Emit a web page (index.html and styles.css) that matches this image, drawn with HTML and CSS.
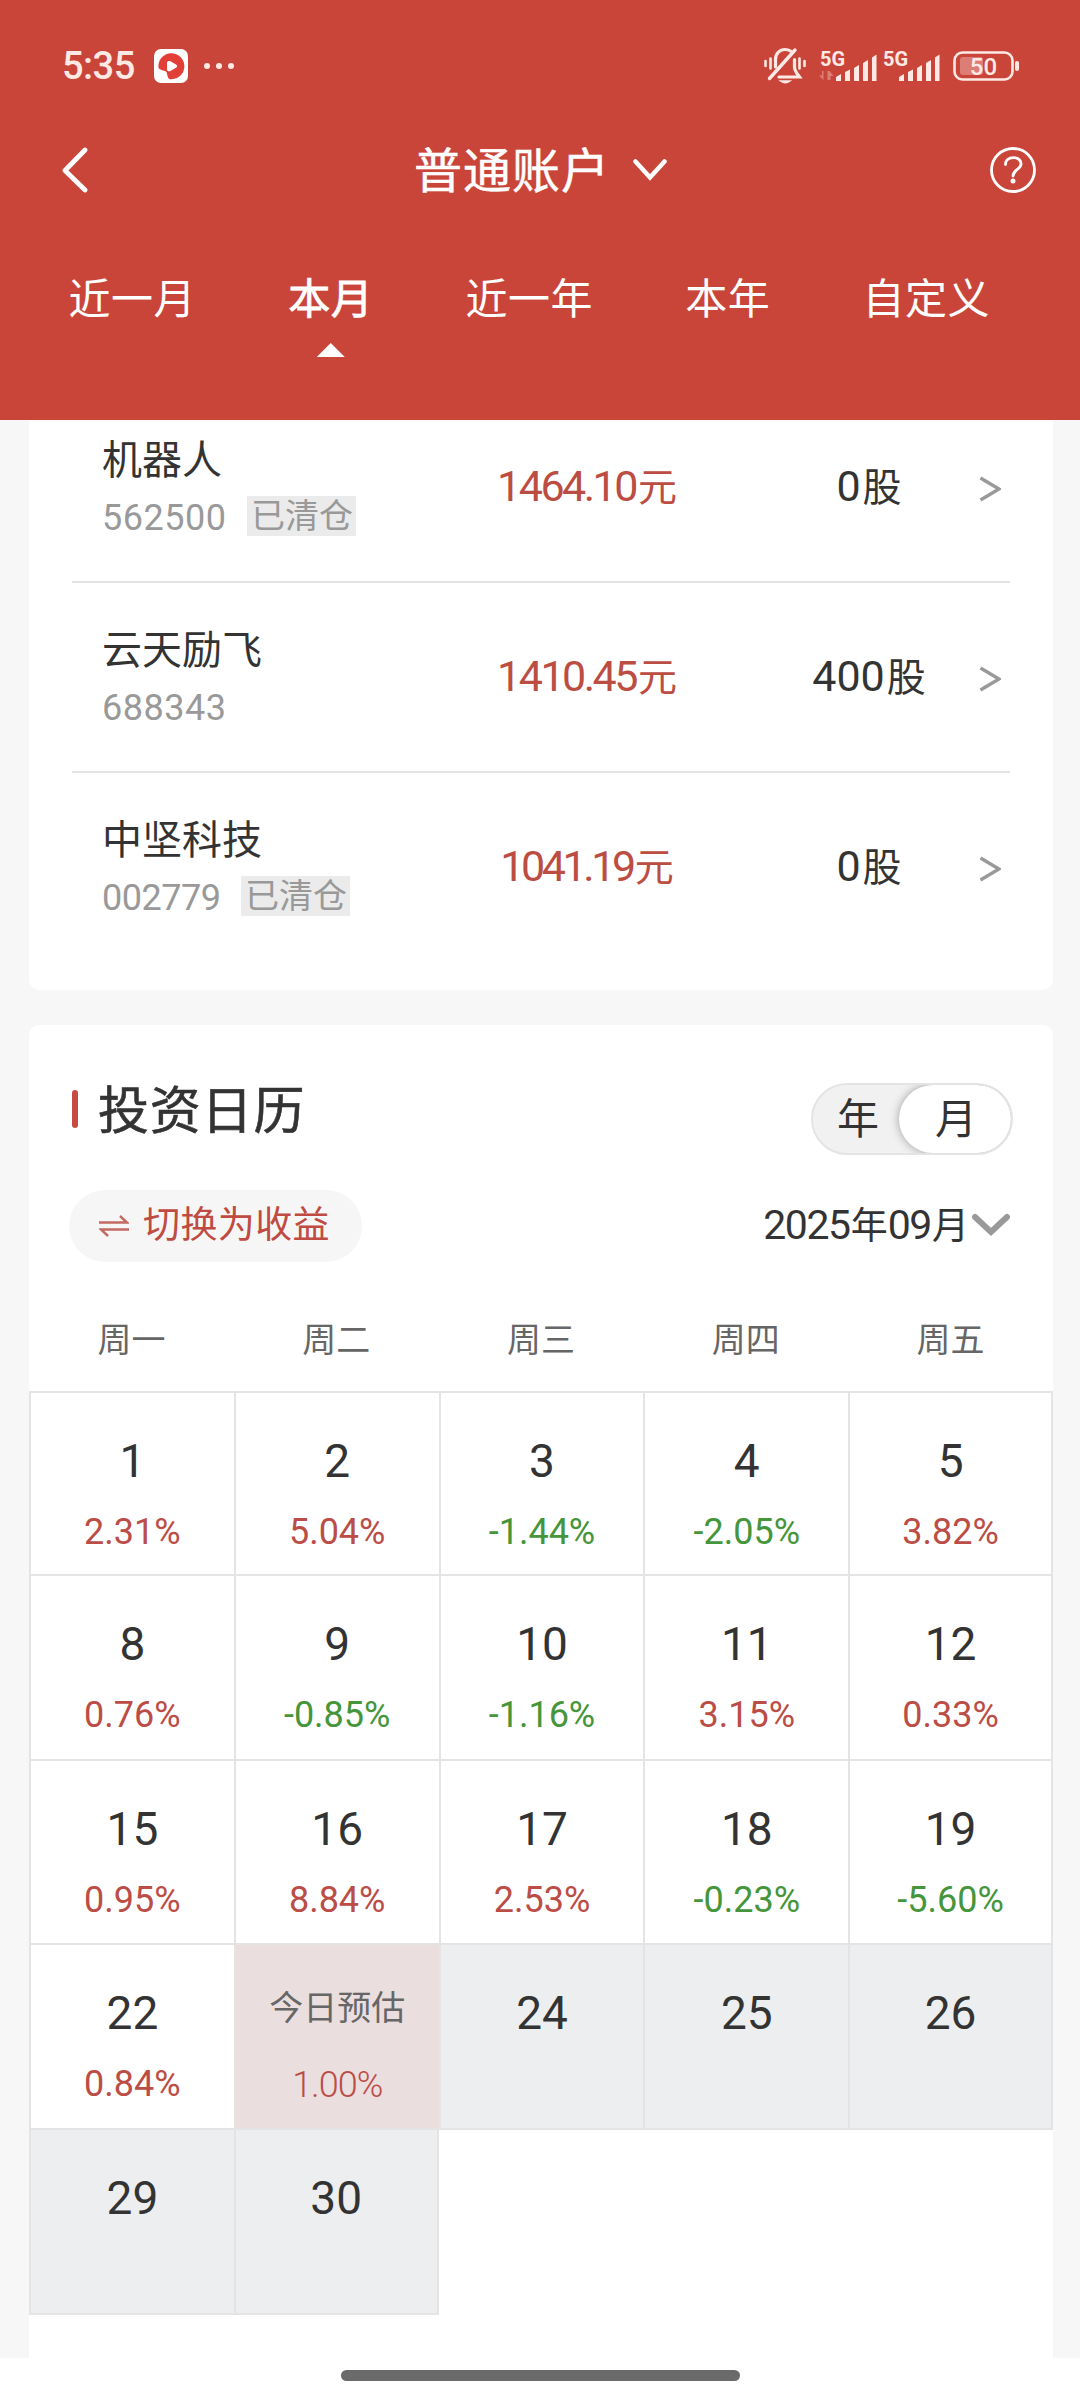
FILE: index.html
```html
<!DOCTYPE html>
<html lang="zh-CN">
<head>
    <meta charset="UTF-8">
    <meta name="viewport" content="width=device-width, initial-scale=1.0">
    <title>普通账户</title>
    <link rel="stylesheet" href="styles.css">
</head>
<body>
    <header class="header">
        <div class="status-bar">
            <span class="time">5:35</span>
            <svg class="app-icon" width="34" height="34" viewBox="0 0 34 34">
                <rect width="34" height="34" rx="7" fill="#fff"/>
                <path d="M4.500 19A13 13 0 1 1 15 30C13 28 13.500 25 12.500 23C11 21 7 22 4.500 19Z" fill="#e13f38"/>
                <path d="M13 13.500C13 12 15 11.500 16.500 12.200L22 15.500C23.500 16.500 23.500 17.800 22 18.800L16.500 22C15 22.800 13 22 13 20.500Z" fill="#fff"/>
            </svg>
            <svg class="dots" width="30" height="6" viewBox="0 0 30 6">
                <circle cx="3" cy="3" r="3"/><circle cx="15" cy="3" r="3"/><circle cx="27" cy="3" r="3"/>
            </svg>
            <div class="status-right">
                <svg class="bell" width="42" height="38" viewBox="0 0 42 38" fill="none" stroke="#ffe9e5" stroke-width="2.800" stroke-linecap="round">
                    <path d="M1.500 14v5M6.500 11.500v10M35.500 11.500v10M40.500 14v5" stroke-width="2.600"/>
                    <path d="M31 3L5.500 31.500" stroke-width="3.400"/>
                    <path d="M11.500 20V12.500C11.500 6 16 2.500 21 2.500C23 2.500 25 3 26.500 4" stroke-width="3.200"/>
                    <path d="M30.500 12.500V20C30.500 24 33 26.500 35.500 30H15" stroke-width="3.200"/>
                    <path d="M16.500 34H26Q21.200 37.500 16.500 34Z" fill="#ffe9e5" stroke-width="1.500"/>
                </svg>
                <svg class="signal" width="122" height="44" viewBox="0 -6 122 44">
                    <text x="1" y="16">5G</text>
                    <path class="faint" d="M4.500 21v9L0 25.500h3V21zM8.500 30v-9h2l4 5h-3v4z"/>
                    <path d="M17 31v-4l5-3v7zM26 31v-9l5-2.500V31zM35 31V18l5-3v16zM44 31V13l5-3v21zM53 31V7.500l4.500-3V31z"/>
                    <text x="64" y="16">5G</text>
                    <path d="M80 31v-4l5-3v7zM89 31v-9l5-2.500V31zM98 31V18l5-3v16zM107 31V13l5-3v21zM116 31V7.500l4.500-3V31z"/>
                </svg>
                <svg class="battery" width="68" height="30" viewBox="0 0 68 30">
                    <rect x="1.500" y="1.500" width="58" height="27" rx="8" fill="none" stroke="#ffe9e5" stroke-width="2.600"/>
                    <rect class="faint" x="7" y="6" width="23" height="18" rx="3"/>
                    <rect x="62" y="10" width="4" height="10" rx="2"/>
                    <text x="30.500" y="23.500" text-anchor="middle">50</text>
                </svg>
            </div>
        </div>

        <div class="nav-bar">
            <svg width="26" height="46" viewBox="0 0 26 46" fill="none" stroke="#fff" stroke-width="4.800" stroke-linecap="round" stroke-linejoin="round">
                <path d="M23 3L3 23.500L23 43"/>
            </svg>
            <div class="account">
                <span>普通账户</span>
                <svg width="34" height="22" viewBox="0 0 34 22" fill="none" stroke="#fff" stroke-width="4.500" stroke-linecap="round">
                    <path d="M2.500 2.500L17 18.500L31.500 2.500"/>
                </svg>
            </div>
            <svg width="46" height="46" viewBox="0 0 46 46" fill="none" stroke="#fff" stroke-width="2.800" stroke-linecap="round">
                <circle cx="23" cy="23" r="21.500"/>
                <path d="M15.500 17.500C15.500 8.500 31 8.500 31 17C31 22.500 23 22.500 23 29"/>
                <circle cx="23" cy="34" r="2.500" fill="#fff" stroke="none"/>
            </svg>
        </div>

        <nav class="tabs">
            <div class="tab">近一月</div>
            <div class="tab active">本月</div>
            <div class="tab">近一年</div>
            <div class="tab">本年</div>
            <div class="tab">自定义</div>
        </nav>
    </header>

    <main class="content">
        <section class="card stocks">
            <div class="stock">
                <div>
                    <div class="name">机器人</div>
                    <div class="code">562500<span class="tag">已清仓</span></div>
                </div>
                <div class="amount">1464.10<span class="unit">元</span></div>
                <div class="shares">0<span class="unit">股</span></div>
                <svg class="arrow" width="22" height="26" viewBox="0 0 22 26"><path d="M1.500 2L20 13L1.500 24"/></svg>
            </div>
            <div class="stock">
                <div>
                    <div class="name">云天励飞</div>
                    <div class="code">688343</div>
                </div>
                <div class="amount">1410.45<span class="unit">元</span></div>
                <div class="shares">400<span class="unit">股</span></div>
                <svg class="arrow" width="22" height="26" viewBox="0 0 22 26"><path d="M1.500 2L20 13L1.500 24"/></svg>
            </div>
            <div class="stock">
                <div>
                    <div class="name">中坚科技</div>
                    <div class="code narrow">002779<span class="tag">已清仓</span></div>
                </div>
                <div class="amount narrow">1041.19<span class="unit">元</span></div>
                <div class="shares">0<span class="unit">股</span></div>
                <svg class="arrow" width="22" height="26" viewBox="0 0 22 26"><path d="M1.500 2L20 13L1.500 24"/></svg>
            </div>
        </section>

        <section class="card calendar">
            <div class="calendar-head">
                <h2>投资日历</h2>
                <div class="toggle">
                    <span class="year">年</span>
                    <span class="month">月</span>
                </div>
            </div>
            <div class="calendar-tools">
                <div class="switch">
                    <svg width="30" height="22" viewBox="0 0 30 22" fill="none" stroke="#c56a62" stroke-width="2.400">
                        <path d="M0 7.500H28L21 1M30 14.500H2L9 21"/>
                    </svg>
                    <span>切换为收益</span>
                </div>
                <div class="date">
                    <span>2025<span class="han">年</span>09<span class="han">月</span></span>
                    <svg width="40" height="26" viewBox="0 0 40 26" fill="none" stroke="#999" stroke-width="6" stroke-linecap="round">
                        <path d="M4 4L20 19L36 4"/>
                    </svg>
                </div>
            </div>
            <div class="weekdays">
                <span>周一</span><span>周二</span><span>周三</span><span>周四</span><span>周五</span>
            </div>
            <div class="days">
                <div class="day"><b>1</b><span class="up">2.31%</span></div>
                <div class="day"><b>2</b><span class="up">5.04%</span></div>
                <div class="day"><b>3</b><span class="down">-1.44%</span></div>
                <div class="day"><b>4</b><span class="down">-2.05%</span></div>
                <div class="day last"><b>5</b><span class="up">3.82%</span></div>

                <div class="day"><b>8</b><span class="up">0.76%</span></div>
                <div class="day"><b>9</b><span class="down">-0.85%</span></div>
                <div class="day"><b>10</b><span class="down">-1.16%</span></div>
                <div class="day"><b>11</b><span class="up">3.15%</span></div>
                <div class="day last"><b>12</b><span class="up">0.33%</span></div>

                <div class="day"><b>15</b><span class="up">0.95%</span></div>
                <div class="day"><b>16</b><span class="up">8.84%</span></div>
                <div class="day"><b>17</b><span class="up">2.53%</span></div>
                <div class="day"><b>18</b><span class="down">-0.23%</span></div>
                <div class="day last"><b>19</b><span class="down">-5.60%</span></div>

                <div class="day"><b>22</b><span class="up">0.84%</span></div>
                <div class="day today"><b>今日预估</b><span class="up">1.00%</span></div>
                <div class="day future"><b>24</b></div>
                <div class="day future"><b>25</b></div>
                <div class="day future last"><b>26</b></div>

                <div class="day future"><b>29</b></div>
                <div class="day future last"><b>30</b></div>
            </div>
        </section>
    </main>

    <footer class="home-bar">
        <div class="handle"></div>
    </footer>
</body>
</html>
```

FILE: styles.css
```css
* {
    box-sizing: border-box;
}
body {
    margin: 0;
    width: 1080px;
    height: 2400px;
    overflow: hidden;
    display: flex;
    flex-direction: column;
    background-color: #f7f7f7;
    color: #333;
    font-family: Roboto, "Noto Sans CJK SC", sans-serif;
}
svg {
    display: block;
    flex: none;
}

/* Header */
.header {
    position: relative;
    z-index: 1;
    flex: none;
    height: 420px;
    background-color: #ca4539;
    color: #fff;
}
.status-bar {
    display: flex;
    align-items: center;
    height: 132px;
    padding: 0 59px 0 62px;
    color: #ffe9e5;
    fill: #ffe9e5;
}
.time {
    width: 92px;
    font-size: 38px;
    font-weight: 500;
    letter-spacing: -0.5px;
}
.dots {
    margin-left: 16px;
}
.status-right {
    display: flex;
    align-items: center;
    margin-left: auto;
}
.signal {
    margin-left: 13px;
}
.signal text {
    font-size: 20px;
    font-weight: 700;
}
.battery {
    margin-left: 12px;
}
.battery text {
    font-size: 24px;
    font-weight: 500;
}
.faint {
    opacity: 0.35;
}
.nav-bar {
    display: flex;
    align-items: center;
    justify-content: space-between;
    height: 76px;
    padding: 0 44px 0 62px;
}
.account {
    display: flex;
    align-items: center;
    gap: 23px;
    padding-left: 3px;
    font-size: 48px;
    letter-spacing: 1px;
    line-height: 72px;
}
.account span {
    padding-top: 3px;
    -webkit-text-stroke: 0.5px #fff;
}
.tabs {
    display: grid;
    grid-template-columns: repeat(5, 198.5px);
    padding: 62px 0 0 33px;
}
.tab {
    font-size: 42px;
    letter-spacing: 0.5px;
    line-height: 60px;
    text-align: center;
}
.tab.active {
    -webkit-text-stroke: 0.8px #fff;
}
.tab.active::after {
    content: "";
    display: block;
    width: 28px;
    height: 14px;
    margin: 13px auto 0;
    background-color: #fff;
    clip-path: polygon(50% 0, 100% 100%, 0 100%);
}

/* Cards */
.content {
    flex: none;
    height: 1938px;
    padding: 0 27px 0 29px;
}
.card {
    background-color: #fff;
    border-radius: 10px;
}

/* Stock list, scrolled partly under the header */
.stocks {
    margin-top: -27px;
    padding: 0 43px 27px;
}
.stock {
    display: grid;
    grid-template-columns: 337px 356px 208px 37px;
    align-items: center;
    height: 190px;
    border-bottom: 2px solid #e3e3e3;
}
.stock:last-child {
    border-bottom-color: transparent;
}
.name {
    padding-left: 30px;
    font-size: 40px;
    line-height: 52px;
}
.code {
    display: flex;
    align-items: center;
    height: 44px;
    margin-top: 9px;
    padding-left: 30px;
    color: #999;
    font-size: 36px;
    letter-spacing: 0.5px;
}
.code.narrow {
    letter-spacing: -0.5px;
}
.tag {
    width: 109px;
    height: 40px;
    margin: -4px 0 0 21px;
    background-color: #ebebeb;
    font-size: 34px;
    line-height: 41px;
    letter-spacing: 0;
    text-align: center;
}
.amount,
.shares {
    font-size: 43px;
    text-align: center;
    line-height: 60px;
}
.amount {
    color: #bb4d42;
    letter-spacing: -2.5px;
}
.amount.narrow {
    letter-spacing: -3.4px;
}
.unit {
    margin-left: 2px;
    font-size: 39px;
    letter-spacing: 0;
}
.arrow {
    margin: 4px 0 0 6px;
    fill: none;
    stroke: #999;
    stroke-width: 3.4;
}

/* Calendar */
.calendar {
    height: 1333px;
    margin-top: 35px;
    padding-top: 58px;
    border-radius: 10px 10px 0 0;
}
.calendar-head {
    display: flex;
    justify-content: space-between;
    height: 72px;
    padding: 0 40px 0 43px;
}
h2 {
    display: flex;
    align-items: center;
    height: 48px;
    margin: 0;
    font-size: 51px;
    font-weight: 400;
    letter-spacing: 0.8px;
    -webkit-text-stroke: 0.6px #333;
}
h2::before {
    content: "";
    width: 6px;
    height: 38px;
    margin: 4px 20px 0 0;
    border-radius: 3px;
    background-color: #c84a42;
}
.toggle {
    display: flex;
    width: 202px;
    overflow: hidden;
    border: 2px solid #e4e4e4;
    border-radius: 36px;
    background-color: #f1f1f1;
    font-size: 42px;
    line-height: 70px;
    text-align: center;
}
.year {
    width: 86px;
    padding-left: 4px;
}
.month {
    width: 112px;
    padding-left: 2px;
    border-radius: 34px;
    background-color: #fff;
    box-shadow: 0 0 10px rgba(0, 0, 0, 0.35);
}
.calendar-tools {
    display: flex;
    justify-content: space-between;
    height: 72px;
    margin-top: 35px;
    padding: 0 42px 0 40px;
    line-height: 72px;
}
.switch {
    display: flex;
    align-items: center;
    gap: 14px;
    width: 293px;
    padding-left: 30px;
    border-radius: 36px;
    background-color: #f6f6f6;
    color: #bf4b42;
    font-size: 37px;
    letter-spacing: 0.4px;
}
.date {
    display: flex;
    align-items: center;
    gap: 2px;
    font-size: 41px;
    letter-spacing: -1.4px;
}
.han {
    margin-left: 1px;
    font-size: 37px;
    letter-spacing: 0;
}
.weekdays {
    display: grid;
    grid-template-columns: repeat(5, 1fr);
    margin: 53px 0 26px;
    color: #666;
    font-size: 34px;
    line-height: 50px;
    text-align: center;
}
.days {
    display: grid;
    grid-template-columns: repeat(5, 204.8px);
    grid-template-rows: 183px 185px 184px 185px 185px;
}
.day {
    display: flex;
    flex-direction: column;
    align-items: center;
    margin-bottom: -2px;
    padding-top: 38px;
    border: 2px solid #e4e4e4;
    border-right: none;
}
.day.last {
    border-right: 2px solid #e4e4e4;
}
.day b {
    font-size: 46px;
    font-weight: 400;
    line-height: 60px;
}
.day span {
    margin-top: 16px;
    font-size: 36px;
    line-height: 50px;
}
.up {
    color: #bb4d46;
}
.down {
    color: #45953a;
}
.future {
    background-color: #edeef0;
}
.today {
    background-color: #eadede;
}
.today b {
    color: #666;
    font-size: 34px;
    line-height: 51px;
}
.today span {
    margin-top: 26px;
    font-weight: 300;
    letter-spacing: -1px;
}

/* Gesture bar */
.home-bar {
    flex: 1;
    padding-top: 12px;
    background-color: #fff;
}
.handle {
    width: 399px;
    height: 11px;
    margin: 0 auto;
    border-radius: 6px;
    background-color: #6a6a6a;
}
```
